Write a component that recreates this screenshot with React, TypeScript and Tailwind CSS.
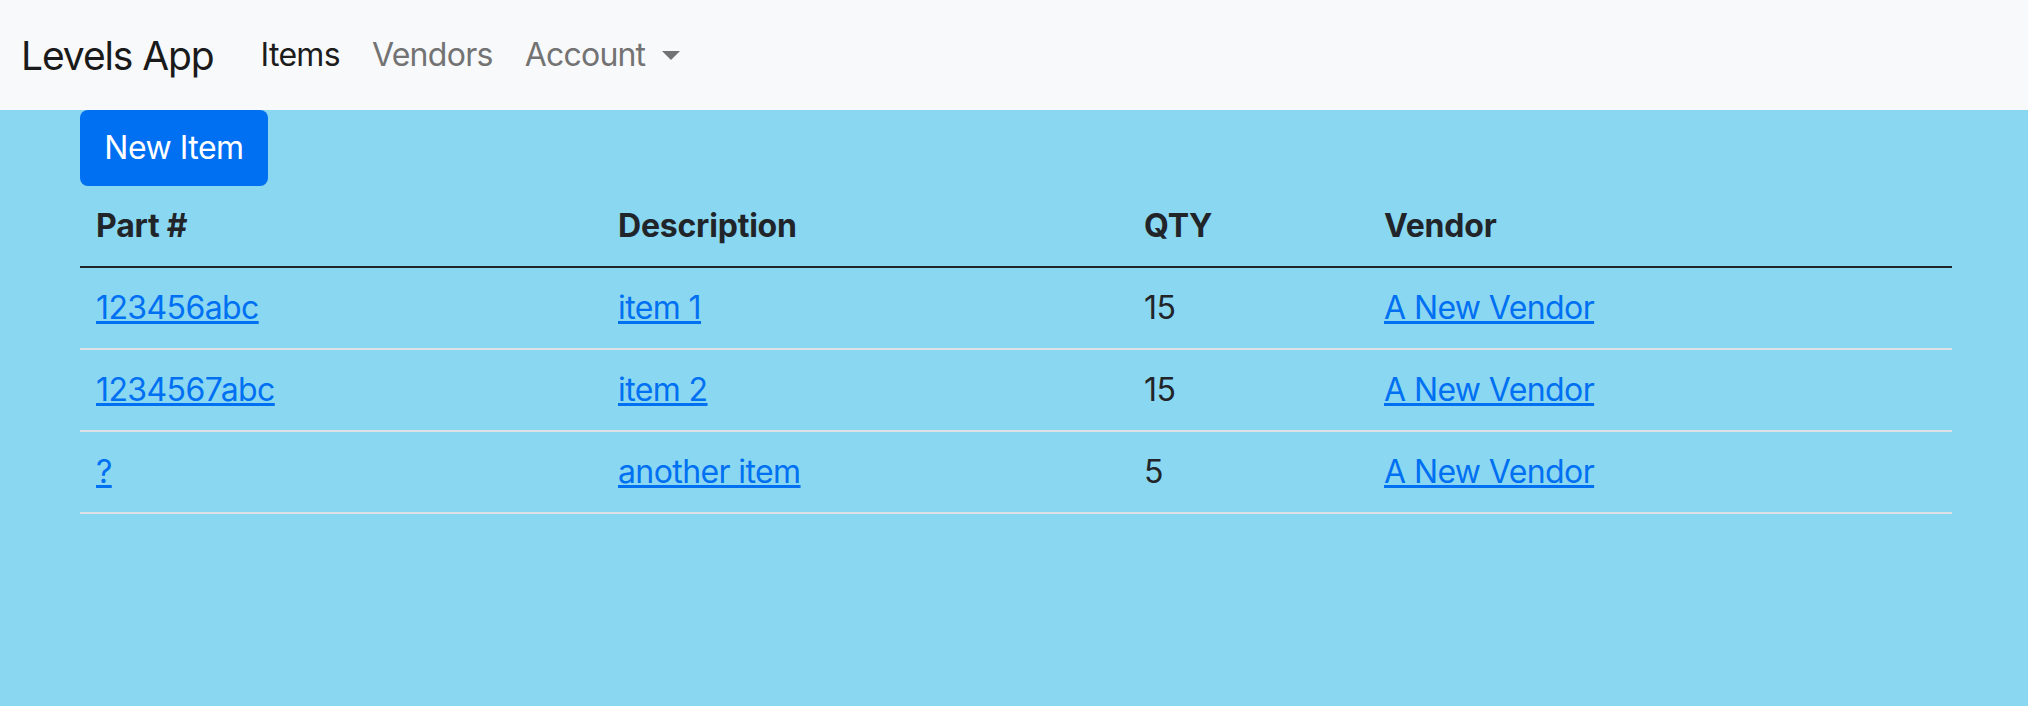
import React from "react";

const rows = [
  { part: "123456abc", desc: "item 1", qty: "15", vendor: "A New Vendor" },
  { part: "1234567abc", desc: "item 2", qty: "15", vendor: "A New Vendor" },
  { part: "?", desc: "another item", qty: "5", vendor: "A New Vendor" },
];

const App = () => {
  return (
    <div
      className="min-h-screen bg-[#8ad7f1]"
      style={{ fontFamily: "Inter, 'Noto Sans', sans-serif" }}
    >
      {/* Navbar */}
      <nav className="h-[110px] bg-[#f8f9fa] flex items-center pl-[21px]">
        <span className="text-[39px] leading-none tracking-[-1.1px] text-[#1a1a1a] mr-[31px]">
          Levels App
        </span>
        <a className="text-[32px] leading-none tracking-[-0.7px] text-[#1c1c1c] px-[16px]">Items</a>
        <a className="text-[32px] leading-none tracking-[-0.7px] text-[#737373] px-[16px]">Vendors</a>
        <a className="text-[32px] leading-none tracking-[-0.8px] text-[#737373] px-[16px] flex items-center">
          Account
          <span className="ml-[17px] w-0 h-0 border-l-[9px] border-r-[9px] border-t-[9px] border-l-transparent border-r-transparent border-t-[#737373]" />
        </a>
      </nav>

      {/* Content */}
      <div className="ml-[80px] w-[1872px]">
        <button className="h-[76px] w-[188px] bg-[#0070f3] text-white text-[32px] tracking-[-0.5px] rounded-[8px] flex items-center justify-center">
          New Item
        </button>

        <table className="w-full table-fixed border-collapse text-[32px] leading-[48px] tracking-[-0.6px] text-[#212529]">
          <colgroup>
            <col className="w-[522px]" />
            <col className="w-[526px]" />
            <col className="w-[240px]" />
            <col />
          </colgroup>
          <thead>
            <tr className="border-b-2 border-[#212529]">
              <th className="text-left font-bold p-[16px] tracking-[-0.2px]">Part #</th>
              <th className="text-left font-bold p-[16px] tracking-[-0.2px]">Description</th>
              <th className="text-left font-bold p-[16px] tracking-[-0.2px]">QTY</th>
              <th className="text-left font-bold p-[16px] tracking-[-0.2px]">Vendor</th>
            </tr>
          </thead>
          <tbody>
            {rows.map((r, idx) => (
              <tr key={idx} className="border-b-2 border-[#dee2e6]">
                <td className="p-[16px]">
                  <a className="text-[#0070f3] underline">{r.part}</a>
                </td>
                <td className="p-[16px]">
                  <a className="text-[#0070f3] underline">{r.desc}</a>
                </td>
                <td className="p-[16px]">{r.qty}</td>
                <td className="p-[16px]">
                  <a className="text-[#0070f3] underline">{r.vendor}</a>
                </td>
              </tr>
            ))}
          </tbody>
        </table>
      </div>
    </div>
  );
};

export default App;
